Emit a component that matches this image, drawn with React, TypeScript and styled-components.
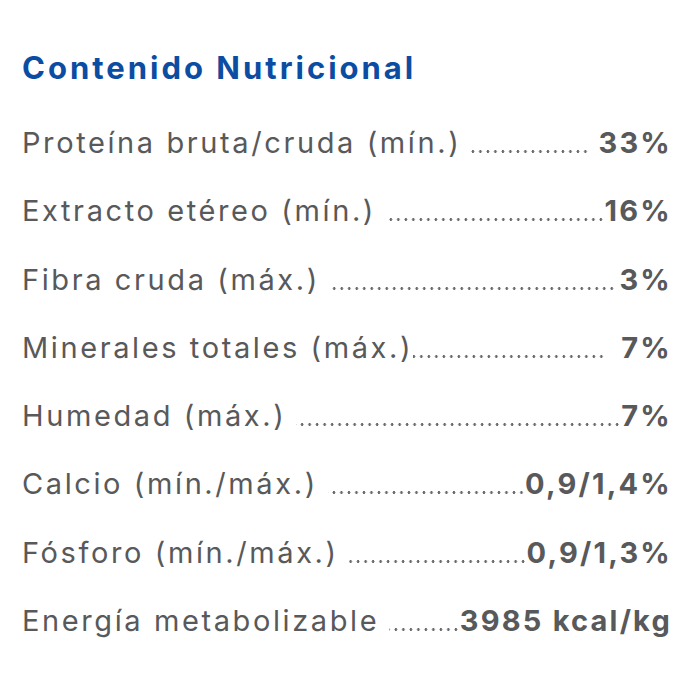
import React from "react";
import styled, { createGlobalStyle } from "styled-components";

const Global = createGlobalStyle`
  html, body { margin: 0; padding: 0; background: #ffffff; }
  body { font-family: "Inter", "Liberation Sans", sans-serif; }
`;

const Panel = styled.section`
  width: 700px;
  box-sizing: border-box;
  padding: 46px 28px 0 22px;
  display: flex;
  flex-direction: column;
`;

const Title = styled.h2`
  margin: 0 0 33px 0;
  font-family: "Inter", "Liberation Sans", sans-serif;
  font-weight: 700;
  font-size: 31px;
  line-height: 44px;
  color: #0b4da2;
  letter-spacing: 3px;
`;

const List = styled.div`
  display: flex;
  flex-direction: column;
`;

const Row = styled.div`
  display: flex;
  align-items: baseline;
  height: 68.3px;
  font-size: 29px;
  line-height: 40px;
  color: #58595b;
  white-space: nowrap;
`;

const Label = styled.span<{ $gap: number }>`
  flex: none;
  letter-spacing: 2.6px;
  margin-right: ${(p) => p.$gap}px;
`;

const Leader = styled.span`
  flex: 1 1 auto;
  min-width: 0;
  height: 3px;
  background-image: radial-gradient(circle, #6a6b6d 1.2px, transparent 1.6px);
  background-size: 7.5px 3px;
  background-repeat: repeat-x;
  background-position: right bottom;
`;

const Value = styled.span<{ $gap: number }>`
  flex: none;
  font-weight: 700;
  color: #58595b;
  letter-spacing: 2.2px;
  margin-left: ${(p) => p.$gap}px;
`;

const rows = [
  { label: "Proteína bruta/cruda (mín.)", value: "33%", before: 10, after: 9 },
  { label: "Extracto etéreo (mín.)", value: "16%", before: 10, after: 0 },
  { label: "Fibra cruda (máx.)", value: "3%", before: 10, after: 4 },
  { label: "Minerales totales (máx.)", value: "7%", before: 0, after: 16 },
  { label: "Humedad (máx.)", value: "7%", before: 10, after: 0 },
  { label: "Calcio (mín./máx.)", value: "0,9/1,4%", before: 10, after: 0 },
  { label: "Fósforo (mín./máx.)", value: "0,9/1,3%", before: 10, after: 0 },
  { label: "Energía metabolizable", value: "3985 kcal/kg", before: 10, after: 0 },
];

export default function App() {
  return (
    <>
      <Global />
      <Panel>
        <Title>Contenido Nutricional</Title>
        <List>
          {rows.map((r) => (
            <Row key={r.label}>
              <Label $gap={r.before}>{r.label}</Label>
              <Leader aria-hidden="true" />
              <Value $gap={r.after}>{r.value}</Value>
            </Row>
          ))}
        </List>
      </Panel>
    </>
  );
}
